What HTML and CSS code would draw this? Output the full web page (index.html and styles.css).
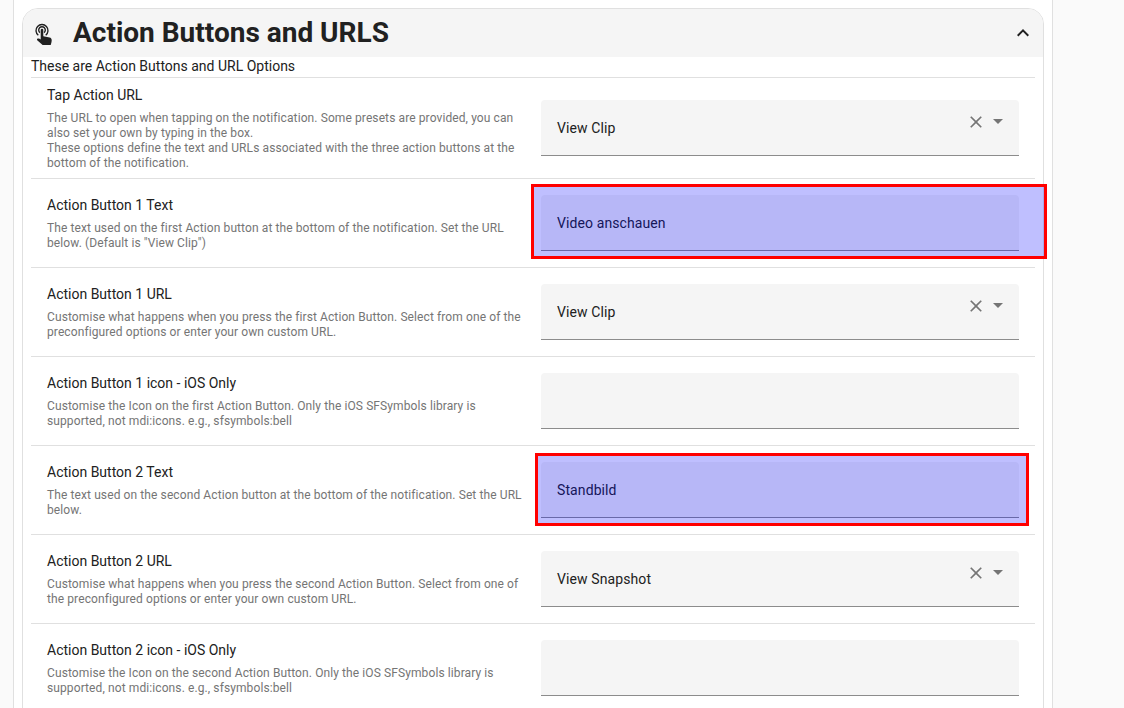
FILE: index.html
```html
<!DOCTYPE html>
<html lang="en">
<head>
<meta charset="utf-8">
<title>Action Buttons and URLS</title>
<link rel="stylesheet" href="styles.css">
</head>
<body>
<div class="page">
  <main class="content">
    <section class="card">
      <header class="card-head">
        <svg class="touch-icon" viewBox="0 0 24 24" width="24" height="24">
          <path class="ring" d="M6.300 13.200A6 6 0 1 1 13.700 13.200"/>
          <path class="ring" d="M7.900 10.600A3.300 3.300 0 1 1 12.100 10.600"/>
          <path d="M10 6.800a1.300 1.300 0 0 1 1.300 1.300v6.100l6.300 1.400c1.400.3 2.100 1.300 2.100 2.600 0 1.300-.4 3.300-1 4.800H10.600L5.200 18.300c-.6-.7-.2-1.600.6-1.800 1-.2 2 .1 2.900 1V8.100A1.300 1.300 0 0 1 10 6.800Z"/>
        </svg>
        <h1 class="card-title">Action Buttons and URLS</h1>
        <svg class="chevron" viewBox="0 0 24 24" width="24" height="24"><path d="M7.400 15.400 12 10.800l4.600 4.600L18 14l-6-6-6 6z"/></svg>
      </header>
      <div class="card-body">
        <p class="intro">These are Action Buttons and URL Options</p>

        <div class="row row-tall">
          <div class="info">
            <div class="label">Tap Action URL</div>
            <div class="desc">The URL to open when tapping on the notification. Some presets are provided, you can also set your own by typing in the box.<br>These options define the text and URLs associated with the three action buttons at the bottom of the notification.</div>
          </div>
          <div class="field"><span class="value">View Clip</span>
            <svg class="clear" viewBox="0 0 24 24" width="20" height="20"><path d="M19 6.400 17.600 5 12 10.600 6.400 5 5 6.400 10.600 12 5 17.600 6.400 19 12 13.400 17.600 19 19 17.600 13.400 12z"/></svg>
            <span class="caret"></span></div>
        </div>

        <div class="row">
          <div class="info">
            <div class="label">Action Button 1 Text</div>
            <div class="desc">The text used on the first Action button at the bottom of the notification. Set the URL below. (Default is "View Clip")</div>
          </div>
          <div class="field"><span class="value">Video anschauen</span></div>
        </div>

        <div class="row">
          <div class="info">
            <div class="label">Action Button 1 URL</div>
            <div class="desc">Customise what happens when you press the first Action Button. Select from one of the preconfigured options or enter your own custom URL.</div>
          </div>
          <div class="field"><span class="value">View Clip</span>
            <svg class="clear" viewBox="0 0 24 24" width="20" height="20"><path d="M19 6.400 17.600 5 12 10.600 6.400 5 5 6.400 10.600 12 5 17.600 6.400 19 12 13.400 17.600 19 19 17.600 13.400 12z"/></svg>
            <span class="caret"></span></div>
        </div>

        <div class="row">
          <div class="info">
            <div class="label">Action Button 1 icon - iOS Only</div>
            <div class="desc">Customise the Icon on the first Action Button. Only the iOS SFSymbols library is supported, not mdi:icons. e.g., sfsymbols:bell</div>
          </div>
          <div class="field"></div>
        </div>

        <div class="row">
          <div class="info">
            <div class="label">Action Button 2 Text</div>
            <div class="desc">The text used on the second Action button at the bottom of the notification. Set the URL below.</div>
          </div>
          <div class="field"><span class="value">Standbild</span></div>
        </div>

        <div class="row">
          <div class="info">
            <div class="label">Action Button 2 URL</div>
            <div class="desc">Customise what happens when you press the second Action Button. Select from one of the preconfigured options or enter your own custom URL.</div>
          </div>
          <div class="field"><span class="value">View Snapshot</span>
            <svg class="clear" viewBox="0 0 24 24" width="20" height="20"><path d="M19 6.400 17.600 5 12 10.600 6.400 5 5 6.400 10.600 12 5 17.600 6.400 19 12 13.400 17.600 19 19 17.600 13.400 12z"/></svg>
            <span class="caret"></span></div>
        </div>

        <div class="row">
          <div class="info">
            <div class="label">Action Button 2 icon - iOS Only</div>
            <div class="desc">Customise the Icon on the second Action Button. Only the iOS SFSymbols library is supported, not mdi:icons. e.g., sfsymbols:bell</div>
          </div>
          <div class="field"></div>
        </div>
      </div>
    </section>
  </main>
  <div class="mark mark-one"></div>
  <div class="mark mark-two"></div>
</div>
</body>
</html>
```
FILE: styles.css
```css
html, body {
  margin: 0;
  height: 708px;
  overflow: hidden;
  background: #fafafa;
}
.page {
  position: relative;
  width: 1124px;
  height: 708px;
  overflow: hidden;
  font-family: Roboto, sans-serif;
  color: #212121;
}
.content {
  box-sizing: border-box;
  margin-left: 13px;
  width: 1040px;
  min-height: 708px;
  padding: 8px 8px 0;
  background: #fff;
  border-left: 1px solid #e0e0e0;
  border-right: 1px solid #e0e0e0;
}
.card {
  box-sizing: border-box;
  width: 1022px;
  border: 1px solid #e0e0e0;
  border-radius: 16px;
  overflow: hidden;
  background: #fff;
}
.card-head {
  display: flex;
  align-items: center;
  height: 48px;
  padding: 0 8px 0 9px;
  background: #f5f5f5;
}
.touch-icon { fill: #212121; flex: none; margin-top: 1px; }
.ring { fill: none; stroke: #212121; stroke-width: 1.4; }
.card-title {
  flex: 1;
  margin: 0 0 0 17px;
  font-size: 28px;
  font-weight: 700;
  line-height: 48px;
  color: #212121;
}
.chevron { fill: #212121; flex: none; }
.card-body { padding: 0 8px 24px; }
.intro {
  margin: 0;
  height: 20px;
  font-size: 14px;
  line-height: 18px;
  color: #212121;
  border-bottom: 1px solid #e0e0e0;
}
.row {
  box-sizing: border-box;
  display: flex;
  align-items: center;
  gap: 16px;
  height: 89px;
  padding: 0 16px;
  border-bottom: 1px solid #e0e0e0;
}
.row-tall { height: 101px; }
.info { width: 478px; flex: none; }
.label {
  font-size: 14px;
  line-height: 20px;
  color: #212121;
}
.desc {
  margin-top: 6px;
  font-size: 12px;
  line-height: 15px;
  letter-spacing: 0.1px;
  color: #757575;
}
.field {
  box-sizing: border-box;
  display: flex;
  align-items: center;
  width: 478px;
  height: 56px;
  padding: 0 16px;
  flex: none;
  background: #f5f5f5;
  border-bottom: 1px solid #8c8c8c;
  border-radius: 4px 4px 0 0;
}
.value {
  flex: 1;
  font-size: 14px;
  letter-spacing: 0.1px;
  color: #212121;
}
.clear { fill: #757575; margin-right: 3px; margin-top: -12px; flex: none; }
.caret {
  width: 0;
  height: 0;
  margin: -12px 0 0 4px;
  border-left: 5px solid transparent;
  border-right: 5px solid transparent;
  border-top: 5px solid #757575;
  flex: none;
}
.mark {
  position: absolute;
  box-sizing: border-box;
  border: 3px solid #ff0000;
  background: rgba(0, 0, 255, 0.25);
}
.mark-one { left: 531px; top: 184px; width: 516px; height: 75px; }
.mark-two { left: 535px; top: 453px; width: 494px; height: 73px; }
```
